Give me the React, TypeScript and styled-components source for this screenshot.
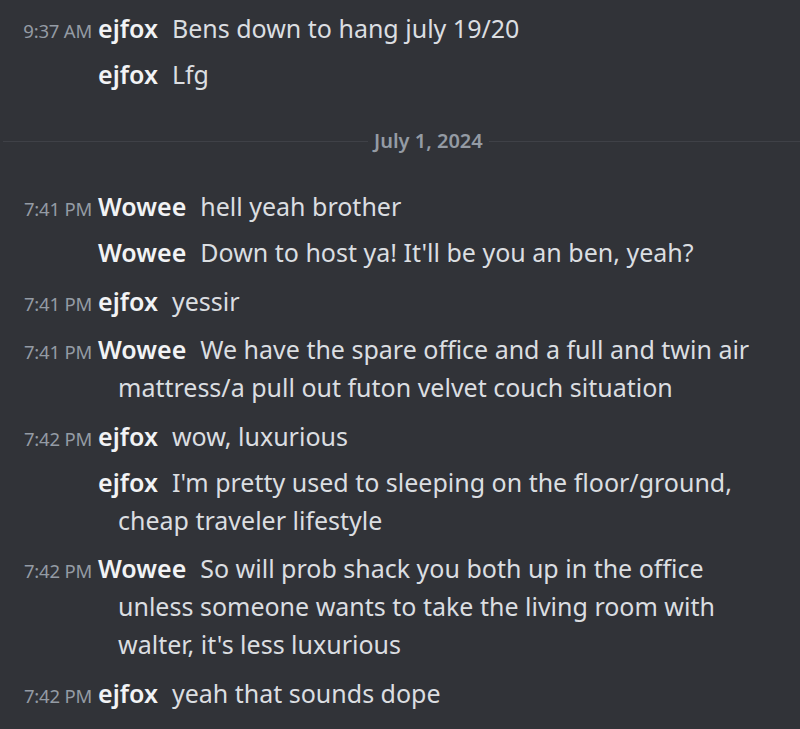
import React from "react";
import styled, { createGlobalStyle } from "styled-components";

const GlobalStyle = createGlobalStyle`
  html, body {
    margin: 0;
    padding: 0;
    background: #313338;
  }
  body {
    font-family: "Noto Sans", "Open Sans", sans-serif;
  }
`;

interface Message {
  time?: string;
  author: string;
  text: string;
  groupStart?: boolean;
}

const before: Message[] = [
  { time: "9:37 AM", author: "ejfox", text: "Bens down to hang july 19/20" },
  { author: "ejfox", text: "Lfg" },
];

const after: Message[] = [
  { time: "7:41 PM", author: "Wowee", text: "hell yeah brother" },
  { author: "Wowee", text: "Down to host ya! It'll be you an ben, yeah?" },
  { time: "7:41 PM", author: "ejfox", text: "yessir", groupStart: true },
  {
    time: "7:41 PM",
    author: "Wowee",
    text: "We have the spare office and a full and twin air mattress/a pull out futon velvet couch situation",
    groupStart: true,
  },
  { time: "7:42 PM", author: "ejfox", text: "wow, luxurious", groupStart: true },
  {
    author: "ejfox",
    text: "I'm pretty used to sleeping on the floor/ground, cheap traveler lifestyle",
  },
  {
    time: "7:42 PM",
    author: "Wowee",
    text: "So will prob shack you both up in the office unless someone wants to take the living room with walter, it's less luxurious",
    groupStart: true,
  },
  { time: "7:42 PM", author: "ejfox", text: "yeah that sounds dope", groupStart: true },
];

const Chat = styled.div`
  background: #313338;
  min-height: 729px;
  padding-top: 5px;
  box-sizing: border-box;
  overflow: hidden;
`;

// compact-mode row: timestamp + author inline, wrapped lines hang under the text
const Row = styled.div<{ $groupStart?: boolean }>`
  padding: 4px 25px 4px 118px;
  text-indent: -118px;
  margin-top: ${(p) => (p.$groupStart ? "2.5px" : "0")};
  font-size: 25px;
  line-height: 38px;
  color: #dbdee1;
`;

const Time = styled.span`
  display: inline-block;
  width: 92px;
  margin-right: 6px;
  text-indent: 0;
  text-align: right;
  font-size: 18.5px;
  line-height: 1;
  color: #949ba4;
  letter-spacing: -0.2px;
`;

const Author = styled.span`
  font-weight: 600;
  color: #f2f3f5;
  margin-right: 14px;
`;

const Divider = styled.div`
  display: grid;
  grid-template-columns: 365px auto 1fr;
  align-items: center;
  column-gap: 6px;
  margin: 37px 0 35px 3px;
  height: 14px;
`;

const Rule = styled.div`
  height: 1px;
  background: #3f4147;
`;

const DateLabel = styled.span`
  font-size: 20px;
  font-weight: 600;
  color: #949ba4;
  line-height: 14px;
`;

const MessageRow = ({ m }: { m: Message }) => (
  <Row $groupStart={m.groupStart}>
    <Time>{m.time ?? ""}</Time>
    <Author>{m.author}</Author>
    {m.text}
  </Row>
);

export default function App() {
  return (
    <>
      <GlobalStyle />
      <Chat>
        {before.map((m, i) => (
          <MessageRow key={i} m={m} />
        ))}
        <Divider>
          <Rule />
          <DateLabel>July 1, 2024</DateLabel>
          <Rule />
        </Divider>
        {after.map((m, i) => (
          <MessageRow key={i} m={m} />
        ))}
      </Chat>
    </>
  );
}
